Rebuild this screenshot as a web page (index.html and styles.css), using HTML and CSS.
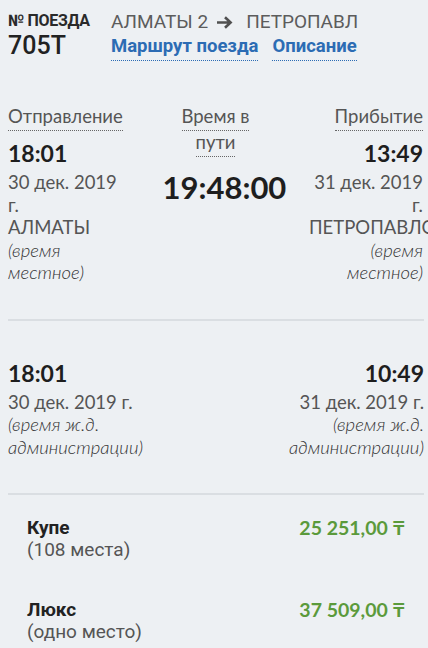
FILE: index.html
```html
<!DOCTYPE html>
<html lang="ru">
<head>
    <meta charset="UTF-8">
    <meta name="viewport" content="width=device-width, initial-scale=1.0">
    <title>Поезд 705Т</title>
    <link rel="stylesheet" href="styles.css">
</head>
<body>
    <header class="train-head">
        <div class="train-number">
            <div class="train-label">№ ПОЕЗДА</div>
            <div class="train-code">705Т</div>
        </div>
        <div class="train-route">
            <div class="route-line">
                <span>АЛМАТЫ 2</span>
                <svg class="route-arrow" width="17" height="13" viewBox="0 0 17 13">
                    <path d="M1 6.5H14.5M9 1.2L14.6 6.5L9 11.8" fill="none" stroke="currentColor" stroke-width="2.6"/>
                </svg>
                <span>ПЕТРОПАВЛ</span>
            </div>
            <div class="route-links">
                <a class="dotted-link">Маршрут поезда</a>
                <a class="dotted-link">Описание</a>
            </div>
        </div>
    </header>

    <section class="times local">
        <div class="time-col">
            <div class="time-label"><span class="dotted">Отправление</span></div>
            <div class="time-value">18:01</div>
            <div class="time-info">30 дек. 2019 г.</div>
            <div class="time-info">АЛМАТЫ</div>
            <div class="time-info note">(время местное)</div>
        </div>
        <div class="time-col center">
            <div class="time-label"><span class="dotted">Время в пути</span></div>
            <div class="duration">19:48:00</div>
        </div>
        <div class="time-col right">
            <div class="time-label"><span class="dotted">Прибытие</span></div>
            <div class="time-value">13:49</div>
            <div class="time-info">31 дек. 2019 г.</div>
            <div class="time-info">ПЕТРОПАВЛОВСК</div>
            <div class="time-info note">(время местное)</div>
        </div>
    </section>

    <hr class="divider">

    <section class="times admin">
        <div class="time-col">
            <div class="time-value">18:01</div>
            <div class="time-info">30 дек. 2019 г.</div>
            <div class="time-info note">(время ж.д. администрации)</div>
        </div>
        <div class="time-col right">
            <div class="time-value">10:49</div>
            <div class="time-info">31 дек. 2019 г.</div>
            <div class="time-info note">(время ж.д. администрации)</div>
        </div>
    </section>

    <hr class="divider">

    <section class="cars">
        <div class="car-row">
            <div>
                <div class="car-type">Купе</div>
                <div class="car-seats">(108 места)</div>
            </div>
            <div class="car-price">25 251,00 ₸</div>
        </div>
        <div class="car-row">
            <div>
                <div class="car-type">Люкс</div>
                <div class="car-seats">(одно место)</div>
            </div>
            <div class="car-price">37 509,00 ₸</div>
        </div>
    </section>
</body>
</html>
```

FILE: styles.css
```css
html {
    overflow-x: hidden;
}

body {
    margin: 0;
    padding: 0 5px 0 8px;
    background-color: #edf0f3;
    font-family: Roboto, "Liberation Sans", sans-serif;
    color: #222;
}

.train-head {
    display: flex;
    padding-top: 11px;
}

.train-number {
    width: 103px;
    flex-shrink: 0;
}

.train-label {
    font-size: 16px;
    line-height: 20px;
    font-weight: bold;
    letter-spacing: -0.3px;
    color: #2a2a2a;
}

.train-code {
    font-size: 25px;
    line-height: 30px;
    font-weight: 500;
    color: #222;
}

.route-line {
    display: flex;
    align-items: center;
    margin-top: 1px;
    font-size: 19px;
    line-height: 20px;
    color: #5c5c5c;
}

.route-arrow {
    margin: 0 13px 0 8px;
    color: #505050;
}

.route-links {
    display: flex;
    gap: 14px;
    margin-top: 3px;
    font-size: 18.5px;
    line-height: 22px;
    font-weight: bold;
}

.dotted-link {
    color: #2c6cb4;
    padding-bottom: 3px;
    border-bottom: 1px dotted #2c6cb4;
}

.times {
    display: grid;
    font-family: Lato, "Open Sans", sans-serif;
}

.times.local {
    grid-template-columns: 114px 106px 114px;
    justify-content: space-between;
    margin-top: 42px;
}

.times.admin {
    grid-template-columns: 1fr 1fr;
    margin-top: 38px;
    margin-right: -1px;
}

.time-col.right {
    text-align: right;
}

.time-col.center {
    text-align: center;
}

.time-label {
    font-size: 18.5px;
    line-height: 26px;
    color: #555;
    margin-bottom: 10px;
}

.dotted {
    padding-bottom: 3px;
    border-bottom: 1px dotted #666;
}

.time-value {
    font-size: 23px;
    line-height: 28px;
    font-weight: bold;
    color: #1e1e1e;
    margin-bottom: 4px;
}

.time-info {
    font-size: 18.5px;
    line-height: 22.5px;
    color: #555;
}

.note {
    font-style: italic;
    font-weight: 300;
    color: #333;
}

.duration {
    margin-top: 14px;
    font-size: 31px;
    line-height: 36px;
    font-weight: bold;
    color: #1e1e1e;
}

.divider {
    margin: 35px -1px 0 0;
    border: none;
    border-top: 2px solid #dadee2;
}

.cars {
    padding: 22px 18px 0 19px;
}

.car-row {
    display: flex;
    justify-content: space-between;
    align-items: flex-start;
    margin-bottom: 38px;
}

.car-type {
    font-size: 19px;
    line-height: 22px;
    font-weight: bold;
    color: #222;
}

.car-seats {
    font-size: 19px;
    line-height: 22px;
    color: #555;
}

.car-price {
    font-family: Lato, "Open Sans", sans-serif;
    font-size: 19.5px;
    line-height: 22px;
    font-weight: bold;
    color: #5b9a3b;
}
```
